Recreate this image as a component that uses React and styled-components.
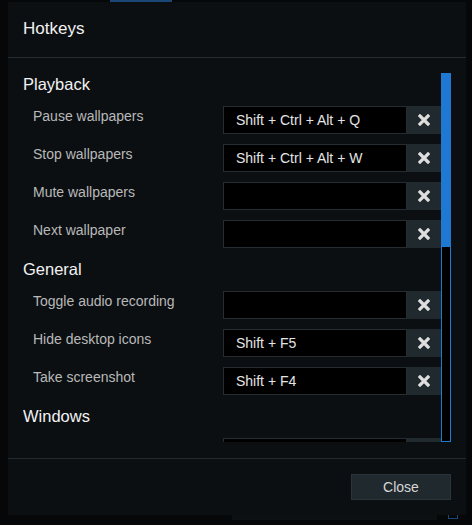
import React from "react";
import styled, { createGlobalStyle } from "styled-components";

const Global = createGlobalStyle`
  html, body { margin: 0; padding: 0; background: #050709; }
  body { font-family: "Liberation Sans", Arial, sans-serif; }
  * { box-sizing: border-box; }
`;

const Backdrop = styled.div`
  position: relative;
  width: 472px;
  height: 525px;
  background: #050709;
  padding: 2px 6px 0 8px;
  overflow: hidden;
`;

const TabLine = styled.div`
  position: absolute;
  left: 110px;
  top: 0;
  width: 62px;
  height: 2px;
  background: #1b4777;
`;

const UnderBar = styled.div`
  position: absolute;
  left: 232px;
  top: 515px;
  width: 205px;
  height: 5px;
  background: #0c1013;
`;

const UnderBox = styled.div`
  position: absolute;
  left: 448px;
  top: 515px;
  width: 10px;
  height: 4px;
  border: 1px solid #1b4777;
  border-top: none;
`;

const Dialog = styled.div`
  position: relative;
  width: 458px;
  height: 513px;
  background: #0b0f12;
  display: flex;
  flex-direction: column;
`;

const Header = styled.div`
  height: 56px;
  border-bottom: 1px solid #252a2e;
  display: flex;
  align-items: center;
  padding: 0 15px 1px;
  color: #f2f2f2;
  font-size: 17px;
`;

const Body = styled.div`
  padding: 15px 15px 16px;
`;

const Scroller = styled.div`
  height: 369px;
  display: flex;
`;

const Viewport = styled.div`
  flex: 1;
  overflow: hidden;
`;

const ScrollTrack = styled.div`
  width: 10px;
  height: 100%;
  background: #000;
  border: 1px solid #1f78d1;
  position: relative;
`;

const ScrollThumb = styled.div`
  position: absolute;
  left: -1px;
  top: -1px;
  width: 10px;
  background: #1f78d1;
`;

const Section = styled.div`
  display: flex;
  flex-direction: column;
  gap: 10px;
  & + & { margin-top: 10px; }
`;

const Heading = styled.div`
  height: 23px;
  line-height: 23px;
  color: #f2f2f2;
  font-size: 16.5px;
`;

const Row = styled.div`
  display: flex;
  align-items: flex-start;
  padding-left: 10px;
  height: 28px;
  flex-shrink: 0;
`;

const Label = styled.div`
  flex: 1;
  color: #b9b9b9;
  font-size: 14px;
  line-height: 20px;
`;

const KeyField = styled.div`
  width: 184px;
  height: 28px;
  background: #000;
  border: 1px solid #262d32;
  color: #e4e4e4;
  font-size: 14px;
  line-height: 26px;
  padding-left: 12px;
  white-space: nowrap;
`;

const ClearButton = styled.button`
  width: 34px;
  height: 28px;
  border: none;
  background: #20292e;
  padding: 0;
  display: flex;
  align-items: center;
  justify-content: center;
`;

const Footer = styled.div`
  margin-top: auto;
  border-top: 1px solid #252a2e;
  padding: 15px 15px 15px;
  display: flex;
  justify-content: flex-end;
`;

const CloseButton = styled.button`
  width: 100px;
  height: 26px;
  background: #20292e;
  border: 1px solid #2a353b;
  color: #d6d6d6;
  font-family: "Liberation Sans", Arial, sans-serif;
  font-size: 14px;
`;

const XIcon = () => (
  <svg width="12" height="12" viewBox="0 0 12 12">
    <path d="M2 2 L10 10 M10 2 L2 10" stroke="#dedede" strokeWidth="3.2" strokeLinecap="square" />
  </svg>
);

const sections = [
  {
    title: "Playback",
    rows: [
      ["Pause wallpapers", "Shift + Ctrl + Alt + Q"],
      ["Stop wallpapers", "Shift + Ctrl + Alt + W"],
      ["Mute wallpapers", ""],
      ["Next wallpaper", ""],
    ],
  },
  {
    title: "General",
    rows: [
      ["Toggle audio recording", ""],
      ["Hide desktop icons", "Shift + F5"],
      ["Take screenshot", "Shift + F4"],
    ],
  },
  {
    title: "Windows",
    rows: [["", ""]],
  },
];

export default function App() {
  const thumbHeight = 174;
  return (
    <>
      <Global />
      <Backdrop>
        <TabLine />
        <UnderBar />
        <UnderBox />
        <Dialog>
          <Header>Hotkeys</Header>
          <Body>
            <Scroller>
              <Viewport>
                {sections.map((s) => (
                  <Section key={s.title}>
                    <Heading>{s.title}</Heading>
                    {s.rows.map(([label, keys], i) => (
                      <Row key={i}>
                        <Label>{label}</Label>
                        <KeyField>{keys}</KeyField>
                        <ClearButton aria-label="Clear">
                          <XIcon />
                        </ClearButton>
                      </Row>
                    ))}
                  </Section>
                ))}
              </Viewport>
              <ScrollTrack>
                <ScrollThumb style={{ height: thumbHeight }} />
              </ScrollTrack>
            </Scroller>
          </Body>
          <Footer>
            <CloseButton>Close</CloseButton>
          </Footer>
        </Dialog>
      </Backdrop>
    </>
  );
}
